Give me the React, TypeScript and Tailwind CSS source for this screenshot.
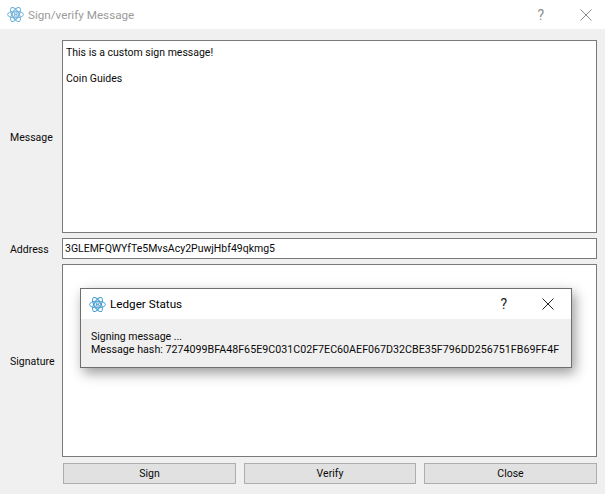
import React from 'react';

const LedgerIcon: React.FC<{ className?: string; color?: string }> = ({ className, color = '#3d9ad1' }) => (
  <svg className={className} viewBox="0 0 18 18" fill="none" stroke={color} strokeWidth="1">
    <ellipse cx="9" cy="9" rx="8.4" ry="3.6" />
    <ellipse cx="9" cy="9" rx="8.4" ry="3.6" transform="rotate(60 9 9)" />
    <ellipse cx="9" cy="9" rx="8.4" ry="3.6" transform="rotate(120 9 9)" />
    <circle cx="9" cy="9" r="3.2" fill="#ffffff" strokeWidth="0.9" />
    <path d="M8 7.2V10.8M8 7.3H9.6Q10.6 7.3 10.6 8.1T9.6 9H8M9.6 9Q10.8 9 10.8 9.9T9.6 10.7H8" strokeWidth="0.7" stroke="#2f86bd" />
  </svg>
);

const CloseIcon: React.FC<{ color: string }> = ({ color }) => (
  <svg width="12" height="12" viewBox="0 0 12 12" stroke={color} strokeWidth="1" fill="none">
    <path d="M0.5 0.5L11.5 11.5M11.5 0.5L0.5 11.5" />
  </svg>
);

const Row: React.FC<{ label: string; className: string; children: React.ReactNode }> = ({ label, className, children }) => (
  <div className={`flex items-center ${className}`}>
    <div className="w-[62px] pl-[10px] pt-[2px] shrink-0">{label}</div>
    <div className="flex-1 h-full bg-white border border-[#7a7a7a] pl-[3px]">{children}</div>
  </div>
);

const DialogButton: React.FC<{ label: string; className: string }> = ({ label, className }) => (
  <button className={`h-[21px] pt-[1px] bg-[#e1e1e1] border border-[#adadad] text-center ${className}`}>{label}</button>
);

export default function App() {
  return (
    <div className="relative w-[605px] h-[494px] bg-[#f0f0f0] text-[10.5px] leading-[16px] text-[#0a0a0a] font-['Roboto',sans-serif] overflow-hidden">
      <header className="h-[29px] bg-white flex items-center pl-[7px]">
        <LedgerIcon className="w-[17px] h-[17px] opacity-80" />
        <span className="ml-[4px] text-[#9b9b9b] text-[11.7px]">Sign/verify Message</span>
        <span className="ml-auto text-[#8c8c8c] text-[14px] mr-[36px]">?</span>
        <span className="mr-[13px] flex"><CloseIcon color="#8c8c8c" /></span>
      </header>

      <main className="pt-[11px] pr-[8px]">
        <Row label="Message" className="h-[193px]">
          <div className="pt-[4px]">
            <p>This is a custom sign message!</p>
            <p className="mt-[10px]">Coin Guides</p>
          </div>
        </Row>
        <Row label="Address" className="h-[21px] mt-[5px]">
          <div className="leading-[20px] -ml-[1px]">3GLEMFQWYfTe5MvsAcy2PuwjHbf49qkmg5</div>
        </Row>
        <Row label="Signature" className="h-[193px] mt-[5px]">
          <div />
        </Row>
        <div className="flex ml-[63px] mt-[6px] gap-[8px]">
          <DialogButton label="Sign" className="w-[173px]" />
          <DialogButton label="Verify" className="w-[172px]" />
          <DialogButton label="Close" className="w-[173px]" />
        </div>
      </main>

      <section className="absolute left-[80px] top-[288px] w-[492px] h-[80px] bg-[#f0f0f0] border border-[#6e6e6e] shadow-[3px_5px_12px_rgba(0,0,0,0.4)]">
        <div className="h-[30px] bg-white flex items-center pl-[8px]">
          <LedgerIcon className="w-[17px] h-[17px]" />
          <span className="ml-[4px] text-[11.7px] text-black">Ledger Status</span>
          <span className="ml-auto text-[14px] text-[#222] mr-[35px]">?</span>
          <span className="mr-[17px] flex"><CloseIcon color="#222222" /></span>
        </div>
        <div className="pl-[10px] pt-[11px] leading-[13px] whitespace-nowrap">
          <p>Signing message ...</p>
          <p className="text-[10.7px]">Message hash: 7274099BFA48F65E9C031C02F7EC60AEF067D32CBE35F796DD256751FB69FF4F</p>
        </div>
      </section>
    </div>
  );
}
